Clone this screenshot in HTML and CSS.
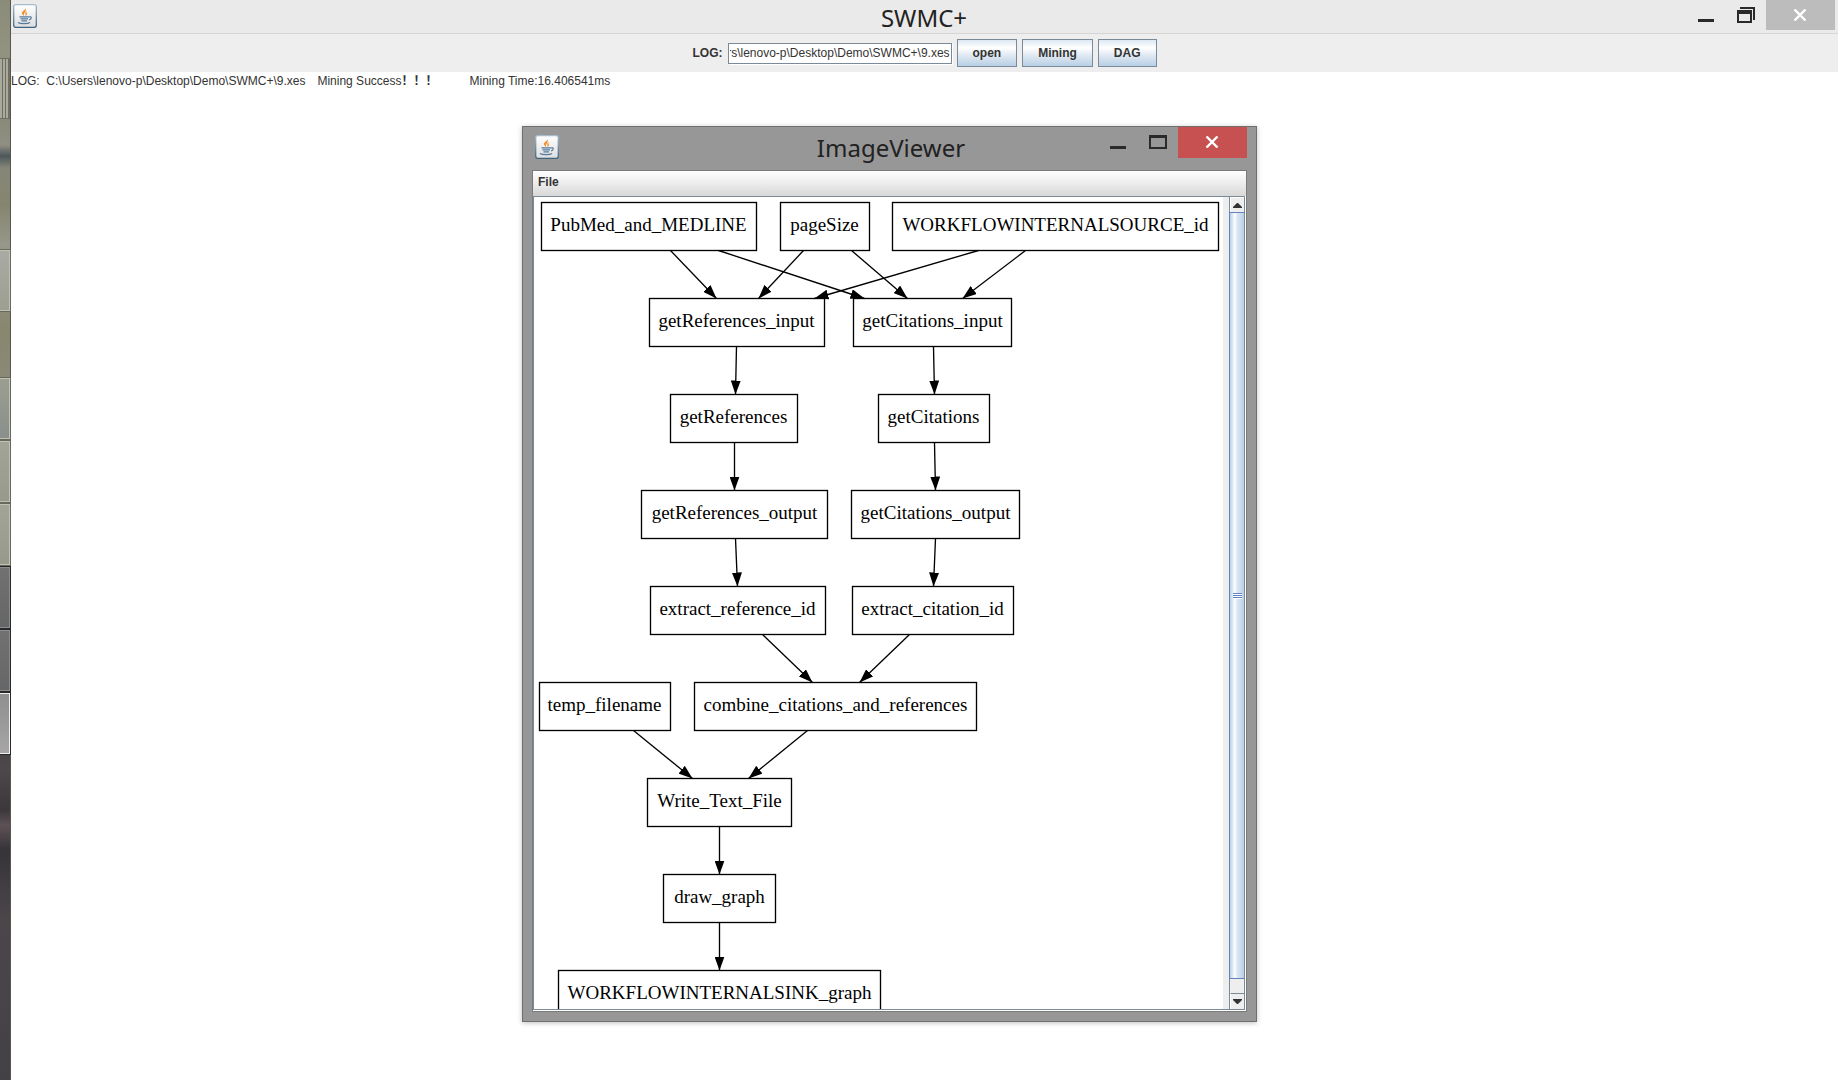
FILE: index.html
```html
<!DOCTYPE html>
<html lang="en">
<head>
<meta charset="utf-8">
<title>SWMC+</title>
<link rel="stylesheet" href="styles.css">
</head>
<body>
<svg class="defs" aria-hidden="true">
  <symbol id="java" viewBox="0 0 24 24">
    <linearGradient id="tile" x1="0" y1="0" x2="0" y2="1"><stop offset="0" stop-color="#fff"/><stop offset="1" stop-color="#dcdddf"/></linearGradient>
    <linearGradient id="rim" x1="0" y1="0" x2="0" y2="1"><stop offset="0" stop-color="#a9bccb"/><stop offset="1" stop-color="#3f647f"/></linearGradient>
    <rect x="0.7" y="0.7" width="22.6" height="22.6" rx="2" fill="url(#tile)" stroke="url(#rim)" stroke-width="1.3"/>
    <path d="M12 4c1 2-3 3-3 5 0 1 1 2 2 3-.3-2 0-3 1-4 1-1 1-3 0-4zM14 7c-2 1-2 2-1.500 3 .3 1 0 1.500-.5 2 2-1 2.500-2 1.500-3-.3-.6 0-1.200.5-2z" fill="#f08a24"/>
    <path d="M6.500 12.800h9.500M7.500 14.800h7.500M8.500 16.800h5.500M16 13c3-1 3 2 0 3M5 18.500c2 1.600 10 1.600 12 0" fill="none" stroke="#557b9c" stroke-width="1.200"/>
  </symbol>
  <symbol id="min" viewBox="0 0 16 3"><path d="M0 0h16v3H0z" fill="#2a2a2a"/></symbol>
  <symbol id="restore" viewBox="0 0 18 16"><path d="M3 0h15v13h-2V2H3zM0 3h15v13H0zM2 7v7h11V7z" fill-rule="evenodd" fill="#2a2a2a"/></symbol>
  <symbol id="max" viewBox="0 0 18 14"><path d="M0 0h18v14H0zM2 3v9h14V3z" fill-rule="evenodd" fill="#2a2a2a"/></symbol>
  <symbol id="close" viewBox="0 0 14 12"><path d="M1.500 0.500l11 11M12.500 0.500l-11 11" stroke="#fff" stroke-width="2.400"/></symbol>
</svg>

<div class="desktop">
  <aside class="taskbar">
    <span class="grip"></span>
    <span class="task first"></span>
    <span class="task second"></span>
    <span class="task"></span>
    <span class="task"></span>
    <span class="task dark"></span>
    <span class="task dark"></span>
    <span class="task active"></span>
  </aside>

  <main class="app">
    <header class="titlebar">
      <svg class="logo"><use href="#java"/></svg>
      <h1 class="title">SWMC+</h1>
      <div class="controls">
        <button class="ctl" aria-label="Minimize"><svg class="i-min" width="16" height="3"><use href="#min"/></svg></button>
        <button class="ctl" aria-label="Restore"><svg width="18" height="16"><use href="#restore"/></svg></button>
        <button class="ctl close" aria-label="Close"><svg width="14" height="12"><use href="#close"/></svg></button>
      </div>
    </header>
    <form class="toolbar">
      <label class="label" for="log">LOG:</label>
      <input class="field" id="log" type="text" value="C:\Users\lenovo-p\Desktop\Demo\SWMC+\9.xes">
      <button class="btn" type="button">open</button>
      <button class="btn" type="button">Mining</button>
      <button class="btn" type="button">DAG</button>
    </form>
    <p class="log"><span>LOG:&nbsp; C:\Users\lenovo-p\Desktop\Demo\SWMC+\9.xes</span><span>Mining Success<b>！！！</b></span><span class="time">Mining Time:16.406541ms</span></p>
  </main>

  <section class="viewer" aria-label="ImageViewer">
    <header class="titlebar viewer-bar">
      <svg class="logo"><use href="#java"/></svg>
      <h2 class="title">ImageViewer</h2>
      <div class="controls">
        <button class="ctl" aria-label="Minimize"><svg class="i-min" width="16" height="3"><use href="#min"/></svg></button>
        <button class="ctl" aria-label="Maximize"><svg width="18" height="14"><use href="#max"/></svg></button>
        <button class="ctl close red" aria-label="Close"><svg width="14" height="12"><use href="#close"/></svg></button>
      </div>
    </header>
    <div class="content">
      <nav class="menubar"><button class="menu">File</button></nav>
      <div class="pane">
        <div class="canvas">
          <svg class="graph" width="689" height="850" viewBox="534 197 689 850">
            <defs>
              <marker id="arrow" markerUnits="userSpaceOnUse" markerWidth="14" markerHeight="10" refX="14" refY="5" orient="auto"><path d="M0 0L14 5L0 10z"/></marker>
            </defs>
            <g transform="translate(.5 .5)">
              <g class="edges">
                <path d="M670 250L716 298"/><path d="M718 250L864 298"/>
                <path d="M803 250L758 298"/><path d="M851 250L907 298"/>
                <path d="M978 250L814 298"/><path d="M1025 250L962 298"/>
                <path d="M736 346L735 394"/><path d="M933 346L934 394"/>
                <path d="M734 442L734 490"/><path d="M934 442L935 490"/>
                <path d="M735 538L737 586"/><path d="M935 538L933 586"/>
                <path d="M762 634L812 682"/><path d="M909 634L859 682"/>
                <path d="M633 730L692 778"/><path d="M807 730L748 778"/>
                <path d="M719 826L719 874"/><path d="M719 922L719 970"/>
              </g>
              <g class="nodes">
                <rect x="541" y="202" width="215" height="48"/><text x="648" y="230">PubMed_and_MEDLINE</text>
                <rect x="780" y="202" width="89" height="48"/><text x="824" y="230">pageSize</text>
                <rect x="892" y="202" width="326" height="48"/><text x="1055" y="230">WORKFLOWINTERNALSOURCE_id</text>
                <rect x="649" y="298" width="175" height="48"/><text x="736" y="326">getReferences_input</text>
                <rect x="853" y="298" width="158" height="48"/><text x="932" y="326">getCitations_input</text>
                <rect x="670" y="394" width="127" height="48"/><text x="733" y="422">getReferences</text>
                <rect x="878" y="394" width="111" height="48"/><text x="933" y="422">getCitations</text>
                <rect x="641" y="490" width="186" height="48"/><text x="734" y="518">getReferences_output</text>
                <rect x="851" y="490" width="168" height="48"/><text x="935" y="518">getCitations_output</text>
                <rect x="650" y="586" width="175" height="48"/><text x="737" y="614">extract_reference_id</text>
                <rect x="852" y="586" width="161" height="48"/><text x="932" y="614">extract_citation_id</text>
                <rect x="539" y="682" width="131" height="48"/><text x="604" y="710">temp_filename</text>
                <rect x="694" y="682" width="282" height="48"/><text x="835" y="710">combine_citations_and_references</text>
                <rect x="647" y="778" width="144" height="48"/><text x="719" y="806">Write_Text_File</text>
                <rect x="663" y="874" width="112" height="48"/><text x="719" y="902">draw_graph</text>
                <rect x="558" y="970" width="322" height="48"/><text x="719" y="998">WORKFLOWINTERNALSINK_graph</text>
              </g>
            </g>
          </svg>
        </div>
        <div class="scrollbar">
          <button class="arrow" aria-label="Scroll up"><svg width="9" height="5" viewBox="0 0 9 5"><path d="M4 0h1l4 4v1H0V4z" fill="#333"/></svg></button>
          <div class="thumb"><span class="ridges"></span></div>
          <button class="arrow down" aria-label="Scroll down"><svg width="9" height="5" viewBox="0 0 9 5"><path d="M0 0h9v1L5 5H4L0 1z" fill="#333"/></svg></button>
        </div>
      </div>
    </div>
  </section>
</div>
<script src="script.js"></script>
</body>
</html>
```
FILE: styles.css
```css
* { box-sizing: border-box; }
body { margin: 0; background: #fff; color: #333; font: 12px/16px "Liberation Sans", Arial, sans-serif; }
button { margin: 0; padding: 0; border: 0; background: none; font: inherit; color: inherit; }
svg { display: block; }
.defs { position: absolute; width: 0; height: 0; }
.desktop { position: relative; display: flex; min-height: 100vh; }

/* Sliver of the taskbar behind the window */
.taskbar {
  flex: none; width: 11px; padding-top: 58px;
  display: flex; flex-direction: column; gap: 2px;
  border-right: 1px solid #55584c;
  background: linear-gradient(#8b8b79 0, #929280 50px, #8a8a7a 120px, #8f8f82 145px, #4d565b 156px, #858678 168px, #85856f 205px, #97978a 245px, #89866f 330px, #8a8976 380px, #85887a 540px, #3a3b3c 562px, #37393b 690px, #4e474b 770px, #3b373b 810px, #5e5156 825px, #363439 850px, #4c464b 920px, #434145 100%);
}
.grip { height: 61px; border: 1px solid #6e6f60; border-left: 0; background: repeating-linear-gradient(90deg, #a9aa9c 0 2px, #6f7063 2px 3px); }
.task { height: 61px; border: 1px solid #bfc1b4; border-left: 0; outline: 1px solid #66695c; background: linear-gradient(#a2a498, #979a8b); }
.first { margin-top: 129px; background: linear-gradient(#a9aaa4, #9e9f91); }
.second { margin-top: 65px; background: linear-gradient(#9b9e91, #898f8b); }
.dark { border-color: #8b8c8c; outline-color: #28292a; background: linear-gradient(#727171, #656667); }
.active { border-color: #f0f0f0; outline-color: #28292a; background: linear-gradient(#8f8f8f, #a7a5a5); }

.app { flex: 1; min-width: 0; }
.titlebar { display: grid; grid-template-columns: 1fr auto 1fr; height: 34px; padding: 0 3px 0 2px; border-bottom: 1px solid #d5d5d5; background: #eaeaea; }
.logo { width: 24px; height: 24px; margin-top: 4px; }
.title { margin: 0; font: 24px/36px "Noto Sans", "Open Sans", sans-serif; color: #222; }
.controls { display: flex; justify-content: flex-end; }
.ctl { display: flex; justify-content: center; width: 40px; height: 30px; padding-top: 7px; }
.i-min { margin-top: 12px; }
.close { width: 69px; padding: 9px 2px 0 0; background: #bcbcbc; }
.red { background: #c75050; }

.toolbar { display: flex; justify-content: center; align-items: center; gap: 5px; height: 38px; background: #eee; }
.label, .btn, .menu { font-weight: bold; font-size: 12px; }
.field { width: 224px; height: 21px; padding: 0 1px; border: 1px solid #7a8a99; box-shadow: 1px 1px #fff; background: #fff; color: #333; font: 12px/18px "Liberation Sans", Arial, sans-serif; }
.btn { height: 28px; padding: 0 15px; border: 1px solid #7a8a99; background: linear-gradient(#dde8f3 0, #fff 30%, #dfe8f2 60%, #b8cfe5 100%); }
.log { display: flex; align-items: baseline; gap: 12px; margin: 0; white-space: nowrap; }
.time { margin-left: 20px; }
.log b { font-family: "Noto Sans CJK SC", sans-serif; line-height: 16px; }

/* Child window on the desktop */
.viewer { position: absolute; left: 522px; top: 126px; width: 735px; height: 896px; display: flex; flex-direction: column; padding: 0 9px 9px; border: 1px solid #6f6f6f; background: #979797; box-shadow: 0 1px 5px rgba(0, 0, 0, .25); }
.viewer-bar { height: 43px; padding: 0 0 0 3px; border: 0; background: none; }
.viewer-bar .logo { margin-top: 8px; }
.viewer-bar .title { line-height: 42px; }
.viewer-bar .ctl { padding-top: 8px; }
.viewer-bar .close { height: 31px; padding-top: 9px; }
.viewer-bar .i-min { margin-top: 11px; }
.content { flex: 1; min-height: 0; display: flex; flex-direction: column; border: 1px solid #7b7b7b; background: #fff; }
.menubar { flex: none; height: 25px; padding: 3px 5px; border-bottom: 1px solid #dadada; background: linear-gradient(#fff, #dadada); }
.menu { display: block; }
.pane { flex: 1; min-height: 0; display: flex; margin: 0 1px 1px 0; border: 1px solid #7a8a99; background: #eee; }
.canvas { flex: 1; min-width: 0; overflow: hidden; }
.graph { background: #fff; }
.edges path { fill: none; stroke: #000; stroke-width: 1.33; marker-end: url(#arrow); }
.nodes rect { fill: none; stroke: #000; stroke-width: 1.33; }
.nodes text { font: 19px "Liberation Serif", "Times New Roman", serif; text-anchor: middle; fill: #000; }
.scrollbar { flex: none; width: 15px; display: flex; flex-direction: column; border-left: 1px solid #7a8a99; }
.arrow { flex: none; height: 15px; display: flex; align-items: center; justify-content: center; background: #eee; border: 1px solid #fff; border-width: 1px 0 0 1px; }
.down { margin-top: 14px; height: 16px; border-top: 1px solid #7a8a99; }
.thumb { flex: 1; display: flex; align-items: center; justify-content: center; margin-left: -1px; border: 1px solid #6382bf; border-right: 0; background: linear-gradient(90deg, #b8cfe5 0, #fff 35%, #dde8f3 50%, #b8cfe5 100%); }
.ridges { width: 9px; height: 6px; background: repeating-linear-gradient(#6382bf 0 1px, #fff 1px 2px); }
```
FILE: script.js
```js
// Keep the end of the log path in view.
const field = document.getElementById("log");
field.scrollLeft = field.scrollWidth;
```
